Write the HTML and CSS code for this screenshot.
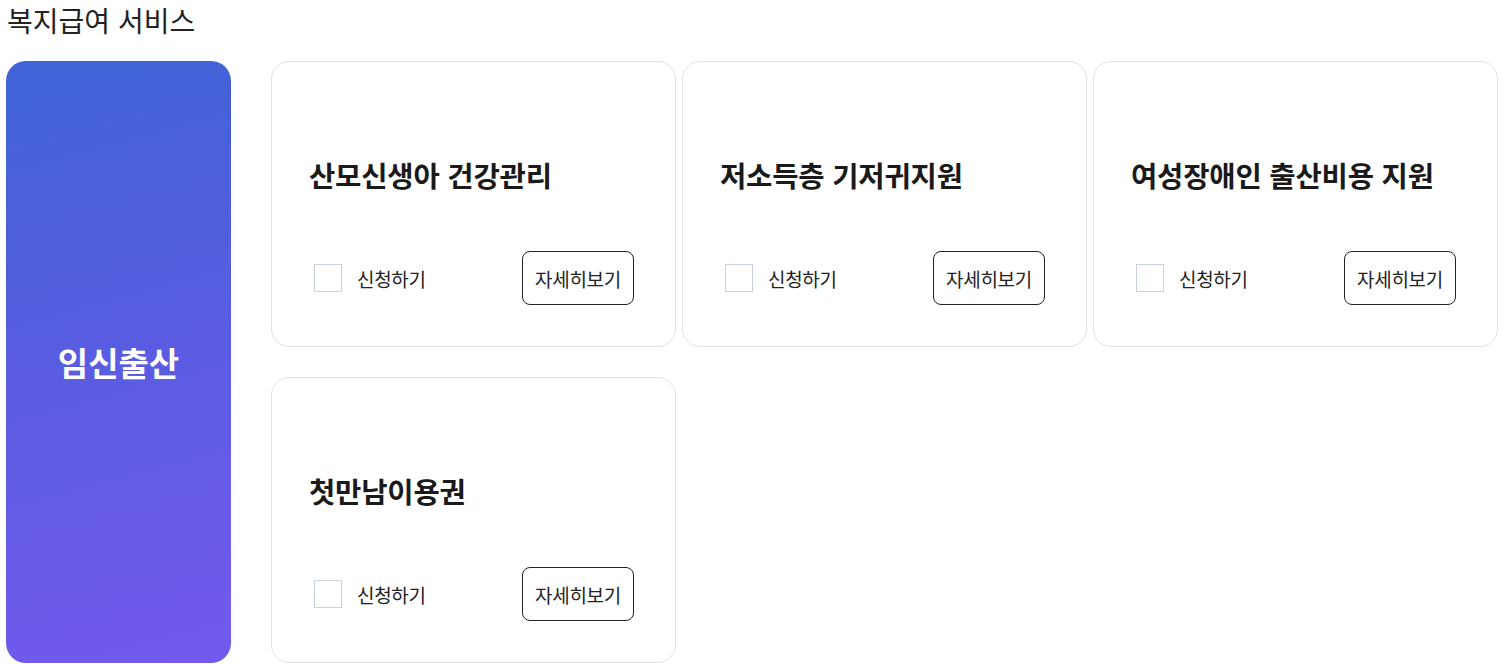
FILE: index.html
```html
<!DOCTYPE html>
<html lang="ko">
<head>
<meta charset="utf-8">
<title>복지급여 서비스</title>
<link rel="stylesheet" href="styles.css">
</head>
<body>
<div class="page">
  <h2 class="page-title">복지급여 서비스</h2>
  <div class="section">
    <div class="category">임신출산</div>
    <div class="cards">
      <div class="card">
        <div class="card-title">산모신생아 건강관리</div>
        <div class="card-foot">
          <label class="apply"><span class="check"></span><span class="apply-text">신청하기</span></label>
          <button class="detail">자세히보기</button>
        </div>
      </div>
      <div class="card">
        <div class="card-title">저소득층 기저귀지원</div>
        <div class="card-foot">
          <label class="apply"><span class="check"></span><span class="apply-text">신청하기</span></label>
          <button class="detail">자세히보기</button>
        </div>
      </div>
      <div class="card">
        <div class="card-title">여성장애인 출산비용 지원</div>
        <div class="card-foot">
          <label class="apply"><span class="check"></span><span class="apply-text">신청하기</span></label>
          <button class="detail">자세히보기</button>
        </div>
      </div>
      <div class="card">
        <div class="card-title">첫만남이용권</div>
        <div class="card-foot">
          <label class="apply"><span class="check"></span><span class="apply-text">신청하기</span></label>
          <button class="detail">자세히보기</button>
        </div>
      </div>
    </div>
  </div>
</div>
</body>
</html>
```

FILE: styles.css
```css
* { box-sizing: border-box; }
html, body { margin: 0; padding: 0; background: #fff; }
body {
  font-family: "Noto Sans CJK KR", "Noto Sans", sans-serif;
  color: #222;
}
.page {
  padding: 0 8px 0 6px;
}
.page-title {
  margin: 0 0 21px 1px;
  font-size: 28px;
  font-weight: 400;
  line-height: 40px;
  letter-spacing: 0;
  color: #222;
}
.section {
  display: flex;
  gap: 40px;
  align-items: stretch;
}
.category {
  flex: 0 0 225px;
  border-radius: 20px;
  background: linear-gradient(165deg, #3f63d6 0%, #5a5ce2 50%, #7459ec 100%);
  color: #fff;
  font-size: 33px;
  font-weight: 700;
  letter-spacing: 0;
  display: flex;
  align-items: center;
  justify-content: center;
}
.cards {
  flex: 1;
  display: grid;
  grid-template-columns: repeat(3, 405px);
  column-gap: 6px;
  row-gap: 30px;
}
.card {
  height: 286px;
  border: 1px solid #e1e1e1;
  border-radius: 18px;
  padding: 40px 41px 41px 37px;
  display: flex;
  flex-direction: column;
}
.card-title {
  flex: 1;
  display: flex;
  align-items: center;
  padding-bottom: 3px;
  font-size: 28.6px;
  font-weight: 700;
  letter-spacing: -0.2px;
  color: #1a1a1a;
  line-height: 42px;
}
.card-foot {
  display: flex;
  align-items: center;
  justify-content: space-between;
}
.apply {
  display: flex;
  align-items: center;
  gap: 15px;
}
.check {
  width: 28px;
  height: 28px;
  margin-left: 5px;
  border: 1px solid #c9d0e2;
  background: #fff;
}
.apply-text {
  font-size: 19px;
  letter-spacing: -0.3px;
  color: #222;
}
.detail {
  width: 112px;
  height: 54px;
  border: 1px solid #222;
  border-radius: 8px;
  background: #fff;
  font-family: inherit;
  font-size: 19px;
  letter-spacing: -0.3px;
  color: #222;
  padding: 0;
}
```
